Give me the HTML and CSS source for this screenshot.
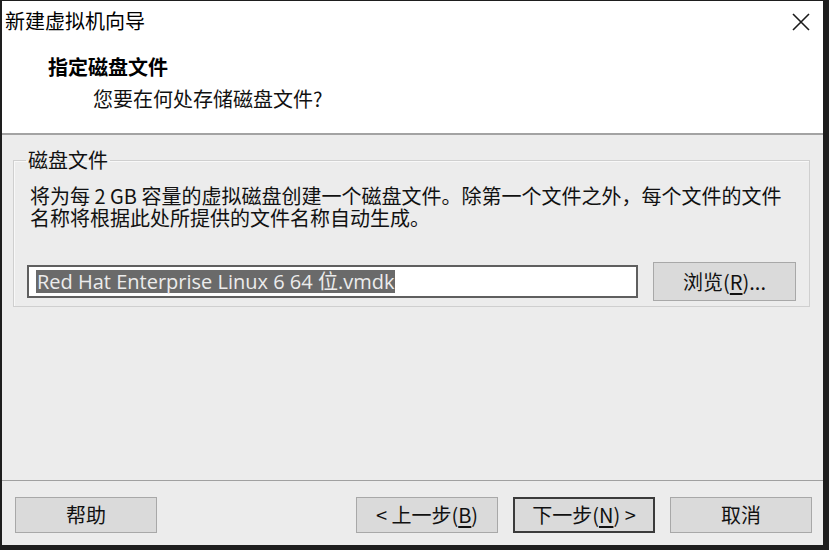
FILE: index.html
```html
<!DOCTYPE html>
<html lang="zh-CN">
<head>
  <meta charset="UTF-8">
  <title>新建虚拟机向导</title>
  <link rel="stylesheet" href="styles.css">
</head>
<body>

<div class="window">
  <div class="titlebar">
    <span class="title">新建虚拟机向导</span>
    <span class="close">
      <svg width="18" height="18" viewBox="0 0 18 18">
        <path d="M1 1 L17 17 M17 1 L1 17" stroke="#1a1a1a" stroke-width="1.6" fill="none"/>
      </svg>
    </span>
  </div>

  <div class="header">
    <div class="heading">指定磁盘文件</div>
    <div class="subheading">您要在何处存储磁盘文件?</div>
  </div>

  <div class="content">
    <fieldset class="group">
      <legend>磁盘文件</legend>
      <p class="desc">将为每 2 GB 容量的虚拟磁盘创建一个磁盘文件。除第一个文件之外，每个文件的文件名称将根据此处所提供的文件名称自动生成。</p>
      <div class="file-row">
        <div class="field"><span class="selected">Red Hat Enterprise Linux 6 64 位.vmdk</span></div>
        <button class="btn browse">浏览(<u>R</u>)...</button>
      </div>
    </fieldset>
  </div>

  <div class="footer">
    <button class="btn">帮助</button>
    <div class="nav">
      <button class="btn">&lt; 上一步(<u>B</u>)</button>
      <button class="btn default">下一步(<u>N</u>) &gt;</button>
      <button class="btn">取消</button>
    </div>
  </div>
</div>

</body>
</html>
```

FILE: styles.css
```css
body {
  margin: 0;
  background: #1e1e1e;
  font-family: "Noto Sans CJK SC", "Open Sans", sans-serif;
  font-size: 20px;
  color: #111;
}

.window {
  margin: 1px 6px 0 2px;
  width: 821px;
  height: 544px;
  background: #ececec;
  display: flex;
  flex-direction: column;
}

.titlebar {
  height: 40px;
  background: #fff;
  display: flex;
  align-items: center;
  justify-content: space-between;
  padding: 0 13px 0 3px;
}

.title {
  line-height: 40px;
  color: #000;
}

.close {
  display: flex;
  margin-top: 1px;
}

.header {
  background: #fff;
  height: 94px;
  box-sizing: border-box;
  padding: 14px 0 0 46px;
  border-bottom: 2px solid #a3a3a3;
}

.heading {
  font-weight: bold;
  line-height: 24px;
  color: #000;
}

.subheading {
  line-height: 24px;
  margin: 8px 0 0 45px;
}

.content {
  flex: 1;
  padding: 14px 13px 0 11px;
}

.group {
  margin: 0;
  padding: 0 13px 5px 13px;
  border: 1px solid #cfcfcf;
  box-shadow: inset 1px 1px 0 #f8f8f8;
}

.group legend {
  padding: 0 2px;
  margin-left: -1px;
  line-height: 22px;
}

.desc {
  margin: 14px 0 0 3px;
  line-height: 22px;
}

.file-row {
  display: flex;
  align-items: center;
  gap: 15px;
  margin-top: 33px;
}

.field {
  flex: 1;
  height: 33px;
  box-sizing: border-box;
  border: 2px solid #5f5f5f;
  background: #fff;
  display: flex;
  align-items: center;
  padding-left: 7px;
}

.selected {
  background: #6a6a6a;
  color: #ececec;
  line-height: 23px;
  font-family: "Open Sans", "Noto Sans CJK SC", sans-serif;
  font-size: 20px;
  padding: 0 1px;
}

.btn {
  font-family: inherit;
  font-size: 20px;
  color: #111;
  background: #dadada;
  border: 1px solid #a8a8a8;
  width: 142px;
  height: 36px;
  padding: 0;
  line-height: 22px;
}

.btn u {
  text-underline-offset: 3px;
}

.browse {
  width: 143px;
  height: 39px;
}

.btn.default {
  border: 2px solid #3b3b3b;
}

.footer {
  border-top: 1px solid #a0a0a0;
  padding: 16px 11px 12px 13px;
  display: flex;
  justify-content: space-between;
}

.nav {
  display: flex;
  gap: 15px;
}
```
